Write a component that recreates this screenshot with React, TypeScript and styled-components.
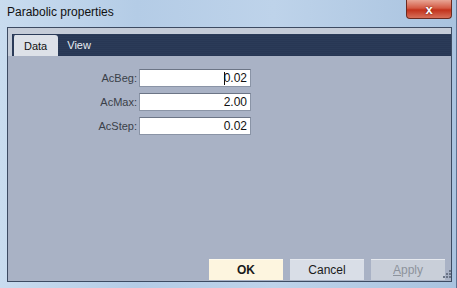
import React from 'react';
import styled, { createGlobalStyle } from 'styled-components';

const GlobalStyle = createGlobalStyle`
  html, body { margin: 0; padding: 0; }
  body { width: 457px; height: 288px; overflow: hidden; font-family: "Liberation Sans", Arial, sans-serif; }
`;

const Window = styled.div`
  width: 457px;
  height: 288px;
  box-sizing: border-box;
  display: flex;
  flex-direction: column;
  background: linear-gradient(90deg, #c9dcef 0%, #b4cce6 30%, #bed3ea 60%, #a9c3df 100%);
  border-right: 1px solid #5d7291;
`;

const TitleBar = styled.div`
  height: 27px;
  display: flex;
  align-items: center;
  justify-content: space-between;
  padding: 0 4px 0 7px;
  box-sizing: border-box;
`;

const Title = styled.span`
  font-size: 12px;
  color: #111;
  margin-top: -3px;
`;

const CloseButton = styled.div`
  width: 46px;
  height: 19px;
  margin-top: -8px;
  border: 1px solid #6b2a20;
  border-top: none;
  border-radius: 0 0 4px 4px;
  background: linear-gradient(180deg, #e8a595 0%, #d45a44 45%, #c2321c 55%, #d7705a 100%);
  display: flex;
  align-items: center;
  justify-content: center;
  color: #fff;
  font-weight: bold;
  font-size: 13px;
  text-shadow: 0 0 2px #5a1408;
  box-sizing: border-box;
`;

const Client = styled.div`
  flex: 1;
  margin: 0 4px 6px 7px;
  border: 1px solid #3d4b62;
  display: flex;
  flex-direction: column;
  background: #c5ccd8;
`;

const TopGap = styled.div`
  height: 6px;
`;

const TabBar = styled.div`
  height: 22px;
  margin-left: 4px;
  display: flex;
  align-items: flex-end;
  background: repeating-linear-gradient(180deg, #2b3b58 0px, #2b3b58 1px, #283754 1px, #283754 2px);
`;

const Tab = styled.div<{ $active?: boolean }>`
  height: ${p => (p.$active ? '21px' : '22px')};
  padding: 0 11px 0 ${p => (p.$active ? '10px' : '9px')};
  display: flex;
  align-items: center;
  font-size: 11px;
  box-sizing: border-box;
  color: ${p => (p.$active ? '#111' : '#e8ecf2')};
  background: ${p => (p.$active ? '#dde1e8' : 'transparent')};
  border-left: ${p => (p.$active ? '2px solid #2b3b58' : 'none')};
  border-radius: ${p => (p.$active ? '3px 3px 0 0' : '0')};
`;

const Panel = styled.div`
  flex: 1;
  display: flex;
  flex-direction: column;
  background: #a9b2c5;
  padding-top: 13px;
`;

const Form = styled.div`
  display: flex;
  flex-direction: column;
  gap: 6px;
`;

const Row = styled.div`
  display: flex;
  align-items: center;
  height: 18px;
`;

const Label = styled.span`
  width: 129px;
  text-align: right;
  font-size: 11px;
  color: #3a3f48;
  padding-right: 2px;
`;

const Field = styled.div`
  width: 112px;
  height: 18px;
  box-sizing: border-box;
  background: #fff;
  border: 1px solid #8a94a6;
  border-top-color: #6c7586;
  display: flex;
  align-items: center;
  justify-content: flex-end;
  padding-right: 3px;
  font-size: 12px;
  color: #111;
`;

const Caret = styled.span`
  display: inline-block;
  width: 1px;
  height: 13px;
  background: #111;
  margin-right: -1px;
`;

const ButtonRow = styled.div`
  margin-top: auto;
  display: flex;
  gap: 7px;
  padding: 0 0 1px 201px;
  align-items: flex-end;
`;

const Button = styled.div<{ $primary?: boolean; $disabled?: boolean }>`
  flex: 0 0 74px;
  height: 21px;
  box-sizing: border-box;
  display: flex;
  align-items: center;
  justify-content: center;
  font-size: 12px;
  font-weight: ${p => (p.$primary ? 'bold' : 'normal')};
  color: ${p => (p.$disabled ? '#8d939c' : '#1a1a1a')};
  background: ${p => (p.$primary ? '#fdf5df' : p.$disabled ? '#c9cfd9' : '#d9dee7')};
  border-top: 1px solid ${p => (p.$primary ? '#fffbee' : '#e6e9ef')};
`;

const Grip = styled.svg`
  flex: 0 0 auto;
  margin-left: -9px;
  margin-bottom: 1px;
`;

export default function App() {
  return (
    <>
      <GlobalStyle />
      <Window>
        <TitleBar>
          <Title>Parabolic properties</Title>
          <CloseButton>x</CloseButton>
        </TitleBar>
        <Client>
          <TopGap />
          <TabBar>
            <Tab $active>Data</Tab>
            <Tab>View</Tab>
          </TabBar>
          <Panel>
            <Form>
              <Row>
                <Label>AcBeg:</Label>
                <Field><Caret />0.02</Field>
              </Row>
              <Row>
                <Label>AcMax:</Label>
                <Field>2.00</Field>
              </Row>
              <Row>
                <Label>AcStep:</Label>
                <Field>0.02</Field>
              </Row>
            </Form>
            <ButtonRow>
              <Button $primary>OK</Button>
              <Button>Cancel</Button>
              <Button $disabled><span><u>A</u>pply</span></Button>
              <Grip width="9" height="9" viewBox="0 0 9 9">
                <g fill="#6a7485">
                  <rect x="6" y="0" width="2" height="2" />
                  <rect x="3" y="3" width="2" height="2" />
                  <rect x="6" y="3" width="2" height="2" />
                  <rect x="0" y="6" width="2" height="2" />
                  <rect x="3" y="6" width="2" height="2" />
                  <rect x="6" y="6" width="2" height="2" />
                </g>
              </Grip>
            </ButtonRow>
          </Panel>
        </Client>
      </Window>
    </>
  );
}
